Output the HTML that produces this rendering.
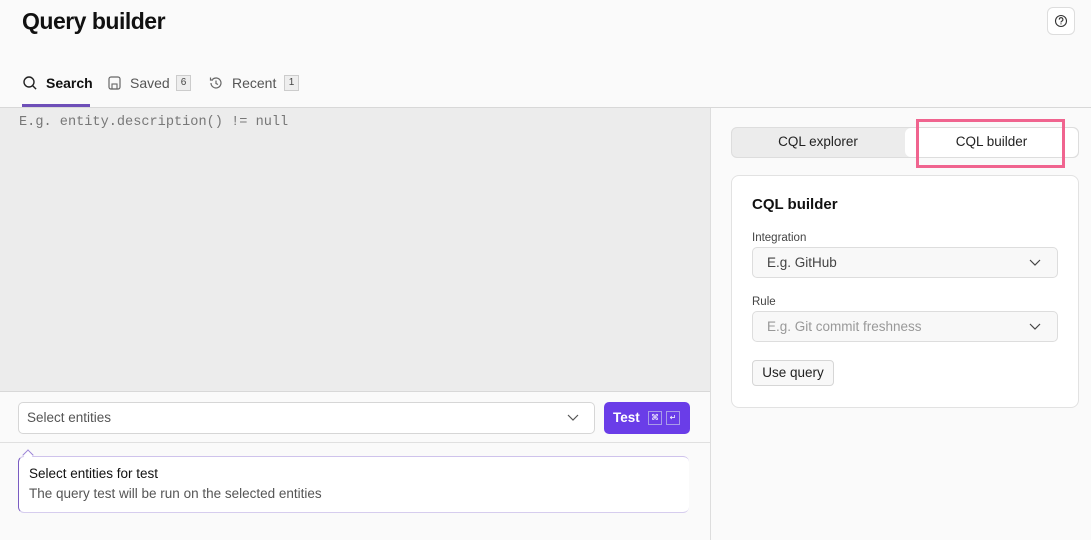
<!DOCTYPE html>
<html><head><style>
*{box-sizing:border-box;margin:0;padding:0}
body{width:1091px;height:540px;overflow:hidden;background:#fafafa;font-family:"Liberation Sans",sans-serif;color:#111;position:relative}
.a{position:absolute}
</style></head><body>
<div class="a" style="left:22px;top:8px;font-size:23px;font-weight:bold;letter-spacing:-0.5px">Query builder</div>
<div class="a" style="left:1047px;top:7px;width:28px;height:28px;border:1px solid #ddd;border-radius:6px;background:#fff">
<svg width="28" height="28" class="a" style="left:-1px;top:-1px"><circle cx="14" cy="14" r="5.5" fill="none" stroke="#333" stroke-width="1.1"/><path d="M12.3 12.6a1.8 1.8 0 1 1 2.4 1.6c-.5.2-.7.5-.7 1v.3" fill="none" stroke="#333" stroke-width="1.1"/><circle cx="14" cy="16.9" r=".6" fill="#333"/></svg></div>
<svg class="a" style="left:22px;top:75px" width="16" height="16"><circle cx="7" cy="7" r="5" fill="none" stroke="#222" stroke-width="1.4"/><path d="M10.6 10.6l3.5 3.5" stroke="#222" stroke-width="1.4"/></svg>
<div class="a" style="left:46px;top:75px;font-size:14px;font-weight:bold">Search</div>
<div class="a" style="left:22px;top:104px;width:68px;height:3px;background:#6e4fb8"></div>
<svg class="a" style="left:107px;top:75px" width="16" height="16"><rect x="2" y="2" width="11" height="12" rx="2" fill="none" stroke="#666" stroke-width="1.2"/><rect x="5" y="9" width="5" height="5" fill="none" stroke="#666" stroke-width="1.1"/></svg>
<div class="a" style="left:130px;top:75px;font-size:14px;color:#555">Saved</div>
<div class="a" style="left:176px;top:75px;width:15px;height:16px;background:#eee;border:1px solid #ccc;font-size:10px;text-align:center;line-height:14px;color:#444">6</div>
<svg class="a" style="left:208px;top:75px" width="16" height="16"><path d="M3 8a5 5 0 1 0 1.5-3.6" fill="none" stroke="#666" stroke-width="1.2"/><path d="M2.5 2.5v2.5h2.5M8 5.5v3l2 1" fill="none" stroke="#666" stroke-width="1.2"/></svg>
<div class="a" style="left:232px;top:75px;font-size:14px;color:#555">Recent</div>
<div class="a" style="left:284px;top:75px;width:15px;height:16px;background:#eee;border:1px solid #ccc;font-size:10px;text-align:center;line-height:14px;color:#444">1</div>
<div class="a" style="left:0;top:107px;width:1091px;height:1px;background:#d8d8d8"></div>
<div class="a" style="left:0;top:108px;width:710px;height:284px;background:#ececec;border-bottom:1px solid #d8d8d8"></div>
<div class="a" style="left:19px;top:115px;font-family:'Liberation Mono',monospace;font-size:13.6px;color:#777">E.g. entity.description() != null</div>
<div class="a" style="left:710px;top:108px;width:1px;height:432px;background:#ddd"></div>
<div class="a" style="left:18px;top:402px;width:577px;height:32px;background:#fff;border:1px solid #d6d6d6;border-radius:5px"></div>
<div class="a" style="left:27px;top:410px;font-size:13.5px;color:#555">Select entities</div>
<svg class="a" style="left:566px;top:412px" width="14" height="12"><path d="M2 3l5 5 5-5" fill="none" stroke="#555" stroke-width="1.2"/></svg>
<div class="a" style="left:604px;top:402px;width:86px;height:32px;background:#6a3de8;border-radius:5px"></div>
<div class="a" style="left:613px;top:410px;font-size:13.5px;font-weight:bold;color:#fff">Test</div>
<div class="a" style="left:648px;top:411px;width:14px;height:14px;border:1px solid #a99be8;color:#fff;font-size:8px;text-align:center;line-height:12px">⌘</div>
<div class="a" style="left:666px;top:411px;width:14px;height:14px;border:1px solid #a99be8;color:#fff;font-size:8px;text-align:center;line-height:12px">↵</div>
<div class="a" style="left:0;top:442px;width:710px;height:1px;background:#e0e0e0"></div>
<div class="a" style="left:18px;top:456px;width:671px;height:57px;background:#fff;border-radius:6px;border-left:1px solid #7a5cc2;border-bottom:1px solid #d6cdee;border-top:1px solid #cfc3ec"></div>
<div class="a" style="left:24px;top:451px;width:8px;height:8px;background:#fff;border-left:1px solid #9a82d6;border-top:1px solid #9a82d6;transform:rotate(45deg)"></div>
<div class="a" style="left:29px;top:466px;font-size:13.5px;color:#111">Select entities for test</div>
<div class="a" style="left:29px;top:486px;font-size:13.5px;color:#555">The query test will be run on the selected entities</div>
<div class="a" style="left:731px;top:127px;width:348px;height:31px;background:#ececec;border:1px solid #ddd;border-radius:6px"></div>
<div class="a" style="left:905px;top:128px;width:173px;height:29px;background:#fff;border-radius:6px"></div>
<div class="a" style="left:731px;top:134px;width:174px;text-align:center;font-size:13.5px;color:#222">CQL explorer</div>
<div class="a" style="left:905px;top:134px;width:173px;text-align:center;font-size:13.5px;color:#222">CQL builder</div>
<div class="a" style="left:916px;top:119px;width:149px;height:49px;border:3px solid #f0648f"></div>
<div class="a" style="left:731px;top:175px;width:348px;height:233px;background:#fff;border:1px solid #e2e2e2;border-radius:8px"></div>
<div class="a" style="left:752px;top:196px;font-size:15px;font-weight:bold">CQL builder</div>
<div class="a" style="left:752px;top:232px;font-size:11.5px;color:#444">Integration</div>
<div class="a" style="left:752px;top:247px;width:306px;height:31px;background:#f8f8f8;border:1px solid #ddd;border-radius:5px"></div>
<div class="a" style="left:767px;top:255px;font-size:13.5px;color:#444">E.g. GitHub</div>
<svg class="a" style="left:1028px;top:257px" width="14" height="12"><path d="M2 3l5 5 5-5" fill="none" stroke="#444" stroke-width="1.2"/></svg>
<div class="a" style="left:752px;top:296px;font-size:11.5px;color:#444">Rule</div>
<div class="a" style="left:752px;top:311px;width:306px;height:31px;background:#f8f8f8;border:1px solid #ddd;border-radius:5px"></div>
<div class="a" style="left:767px;top:319px;font-size:13.5px;color:#999">E.g. Git commit freshness</div>
<svg class="a" style="left:1028px;top:321px" width="14" height="12"><path d="M2 3l5 5 5-5" fill="none" stroke="#444" stroke-width="1.2"/></svg>
<div class="a" style="left:752px;top:360px;width:82px;height:26px;background:#f8f8f8;border:1px solid #d6d6d6;border-radius:4px;text-align:center;line-height:24px;font-size:13.5px;color:#222">Use query</div>
</body></html>
